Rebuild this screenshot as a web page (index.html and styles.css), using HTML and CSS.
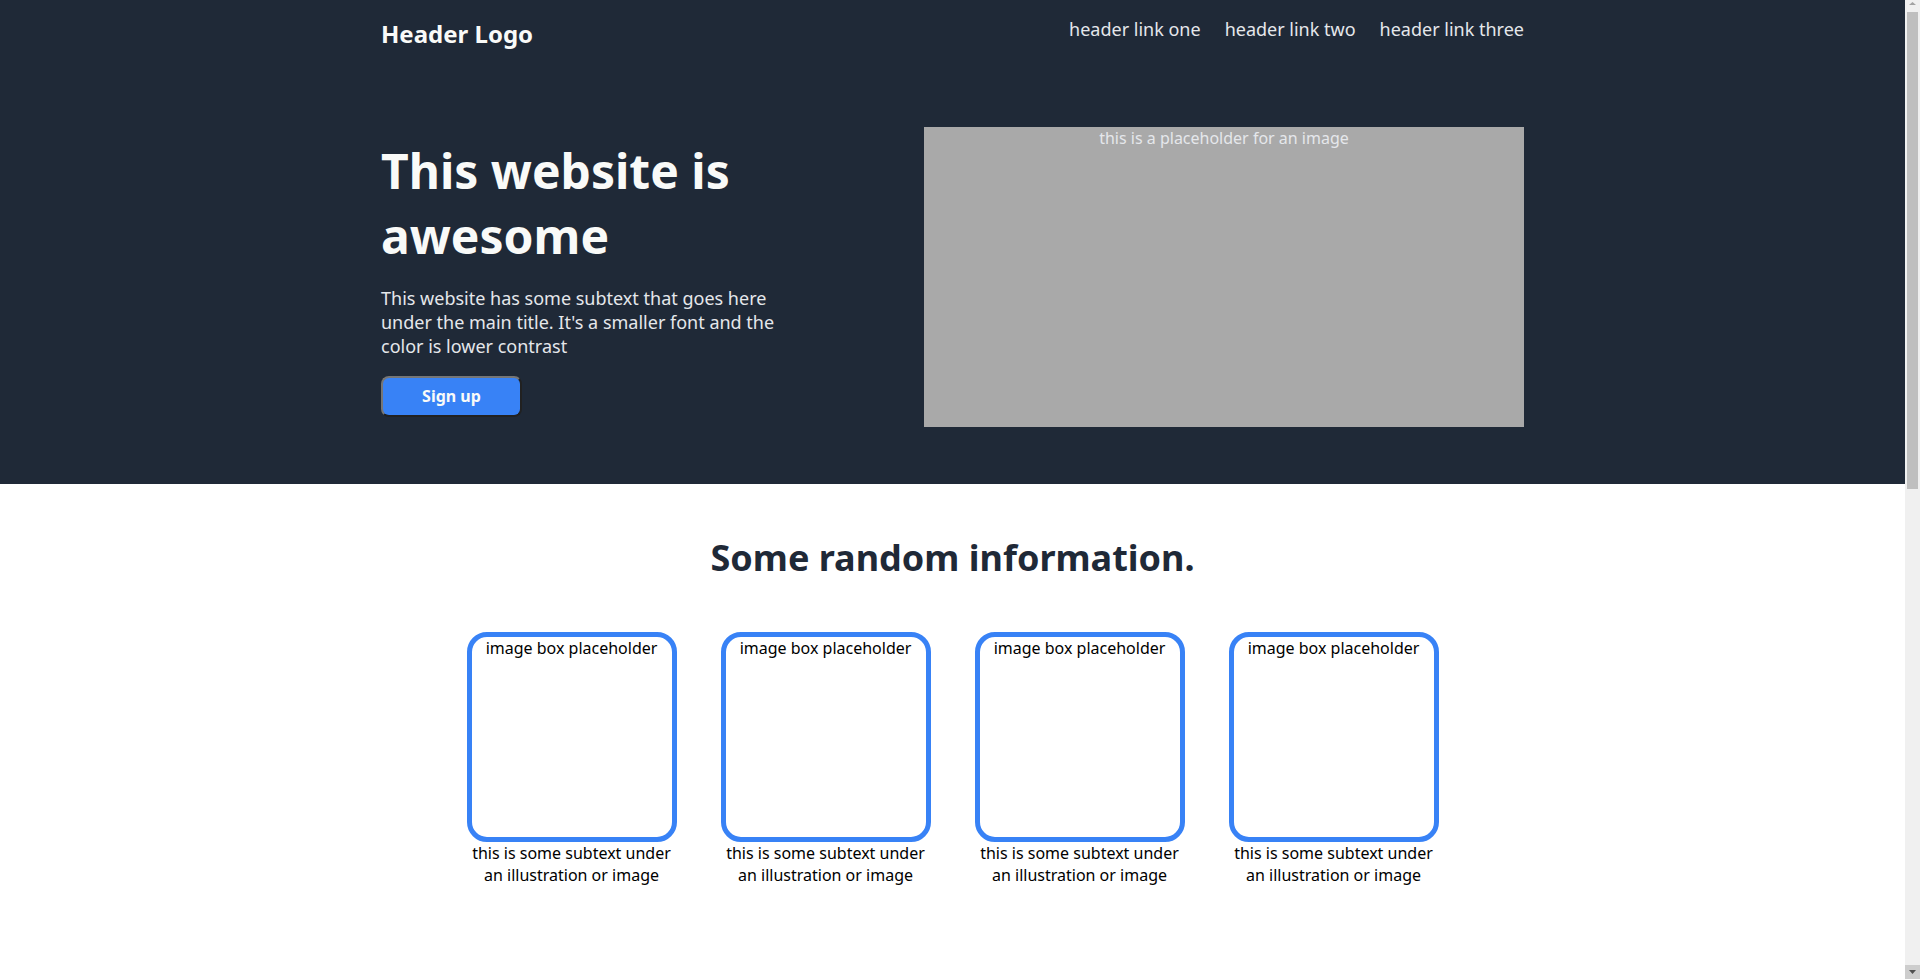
FILE: index.html
```html
<!DOCTYPE html>
<html lang="en">
<head>
<meta charset="utf-8">
<title>Landing Page</title>
<link rel="stylesheet" href="styles.css">
</head>
<body>
<div class="page">
  <div class="top">
    <div class="container">
      <header class="header">
        <div class="logo">Header Logo</div>
        <nav class="links">
          <a href="#">header link one</a>
          <a href="#">header link two</a>
          <a href="#">header link three</a>
        </nav>
      </header>
      <section class="hero">
        <div class="hero-text">
          <h1 class="hero-title">This website is awesome</h1>
          <p class="hero-sub">This website has some subtext that goes here under the main title. It's a smaller font and the color is lower contrast</p>
          <button class="signup">Sign up</button>
        </div>
        <div class="hero-image">this is a placeholder for an image</div>
      </section>
    </div>
  </div>

  <section class="info">
    <h2 class="info-title">Some random information.</h2>
    <div class="cards">
      <div class="card">
        <div class="card-box">image box placeholder</div>
        <div class="card-text">this is some subtext under an illustration or image</div>
      </div>
      <div class="card">
        <div class="card-box">image box placeholder</div>
        <div class="card-text">this is some subtext under an illustration or image</div>
      </div>
      <div class="card">
        <div class="card-box">image box placeholder</div>
        <div class="card-text">this is some subtext under an illustration or image</div>
      </div>
      <div class="card">
        <div class="card-box">image box placeholder</div>
        <div class="card-text">this is some subtext under an illustration or image</div>
      </div>
    </div>
  </section>

  <section class="quote">
    <div class="quote-inner">
      <p class="quote-text">This is an inspiring quote, or a testimonial from a customer. Maybe it's just filling up space, or maybe people will actually read it. Who knows? All I know is that it looks nice.</p>
      <p class="quote-author">-Thor, God of Thunder</p>
    </div>
  </section>

  <section class="cta">
    <div class="cta-box">
      <div class="cta-copy">
        <div class="cta-title">Call to action! It's time!</div>
        <div class="cta-sub">Sign up for our product by clicking that button right over there!</div>
      </div>
      <button class="cta-button">Sign up</button>
    </div>
  </section>

  <footer class="footer">Copyright © The Odin Project 2021</footer>
</div>
<div class="scrollbar" aria-hidden="true">
  <div class="sb-btn sb-up">
    <svg width="15" height="12" viewBox="0 0 15 12"><polygon points="4,5 11,5 7.5,2" fill="#a3a3a3"/></svg>
  </div>
  <div class="sb-track">
    <div class="sb-thumb"></div>
  </div>
  <div class="sb-btn sb-down">
    <svg width="15" height="14" viewBox="0 0 15 14"><polygon points="4,5 11,5 7.5,9" fill="#505050"/></svg>
  </div>
</div>
</body>
</html>
```

FILE: styles.css
```css
html,
body {
  margin: 0;
  height: 100%;
  overflow: hidden;
}

body {
  display: flex;
  font-family: "Noto Sans", "Open Sans", sans-serif;
}

.page {
  flex: 1;
  min-width: 0;
  height: 100vh;
  overflow-y: auto;
  scrollbar-width: none;
}

.scrollbar {
  width: 15px;
  height: 100vh;
  flex-shrink: 0;
  display: flex;
  flex-direction: column;
  background-color: #f0f0f0;
}

.sb-btn {
  display: flex;
  flex-shrink: 0;
}

.sb-up {
  height: 12px;
}

.sb-down {
  height: 14px;
  background-color: #cdcdcd;
}

.sb-track {
  flex: 1;
  display: flex;
  flex-direction: column;
  padding: 0 2px;
}

.sb-thumb {
  height: 477px;
  background-color: #bfbfbf;
}

.top {
  background-color: #1f2937;
}

.container {
  width: 60%;
  margin: 0 auto;
}

.header {
  display: flex;
  justify-content: space-between;
  align-items: flex-start;
  padding-top: 17px;
}

.logo {
  color: #f9faf8;
  font-size: 24px;
  font-weight: 700;
}

.links {
  display: flex;
  gap: 24px;
}

.links a {
  color: #e5e7eb;
  font-size: 18px;
  text-decoration: none;
}

.hero {
  display: flex;
  justify-content: space-between;
  align-items: center;
  padding: 77px 0 57px;
}

.hero-text {
  width: 420px;
}

.hero-title {
  margin: 0;
  color: #f9faf8;
  font-size: 48px;
  font-weight: 700;
}

.hero-sub {
  margin: 18px 0 18px;
  color: #e5e7eb;
  font-size: 18px;
}

.signup {
  width: 141px;
  height: 41px;
  background-color: #3882f6;
  color: #f9faf8;
  border: 2px outset #767676;
  border-radius: 8px;
  font-family: "Noto Sans", "Open Sans", sans-serif;
  font-size: 16px;
  font-weight: 700;
  padding: 0;
}

.hero-image {
  width: 600px;
  height: 300px;
  background-color: #a9a9a9;
  color: #e5e7eb;
  font-size: 16px;
  text-align: center;
}

.info {
  padding: 49px 0 100px;
}

.info-title {
  margin: 0 0 50px;
  text-align: center;
  color: #1f2937;
  font-size: 36px;
  font-weight: 700;
}

.cards {
  display: flex;
  justify-content: center;
  gap: 44px;
}

.card {
  width: 210px;
  text-align: center;
  font-size: 16px;
  color: #000;
}

.card-box {
  box-sizing: border-box;
  width: 210px;
  height: 210px;
  border: 5px solid #3882f6;
  border-radius: 20px;
}

.quote {
  background-color: #e5e7eb;
  padding: 100px 0;
}

.quote-inner {
  width: 60%;
  margin: 0 auto;
}

.quote-text {
  margin: 0;
  color: #1f2937;
  font-size: 36px;
  font-style: italic;
  font-weight: 300;
}

.quote-author {
  margin: 16px 0 0;
  text-align: right;
  color: #1f2937;
  font-size: 24px;
  font-weight: 700;
}

.cta {
  padding: 100px 0;
}

.cta-box {
  width: 60%;
  margin: 0 auto;
  display: flex;
  justify-content: space-between;
  align-items: center;
  box-sizing: border-box;
  padding: 50px 100px;
  background-color: #3882f6;
  border-radius: 10px;
  color: #f9faf8;
}

.cta-title {
  font-size: 24px;
  font-weight: 700;
}

.cta-sub {
  font-size: 18px;
}

.cta-button {
  width: 141px;
  height: 40px;
  background-color: #3882f6;
  color: #f9faf8;
  border: 2px solid #f9faf8;
  border-radius: 8px;
  font-family: "Noto Sans", "Open Sans", sans-serif;
  font-size: 16px;
  font-weight: 700;
}

.footer {
  background-color: #1f2937;
  color: #e5e7eb;
  text-align: center;
  font-size: 18px;
  padding: 40px 0;
}
```
